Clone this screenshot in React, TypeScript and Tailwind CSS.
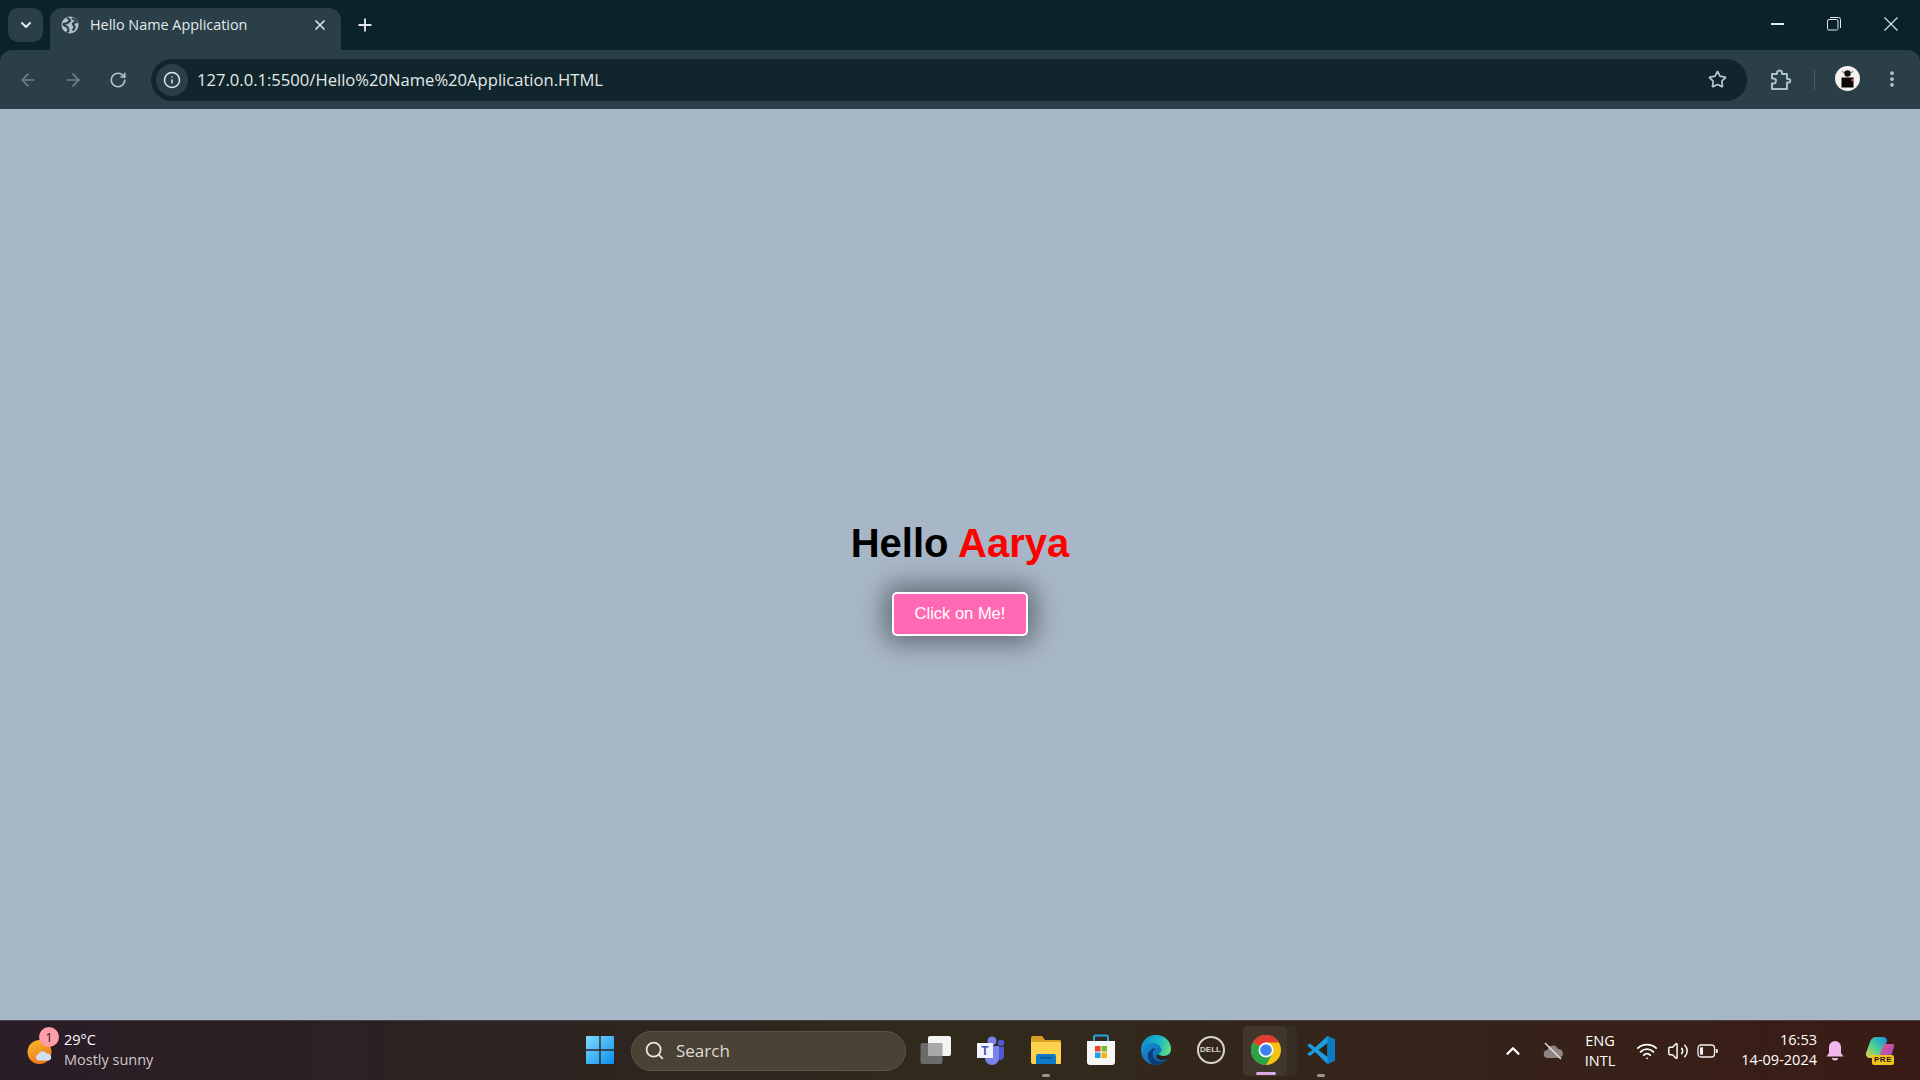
import { useState } from "react";
import {
  ArrowLeft,
  ArrowRight,
  ChevronDown,
  ChevronUp,
  EllipsisVertical,
  Info,
  Plus,
  RotateCw,
  Search,
  Star,
  Volume2,
  Wifi,
  X,
} from "lucide-react";

const GlobeIcon = () => (
  <svg width="18" height="18" viewBox="0 0 18 18">
    <circle cx="9" cy="9" r="8.5" fill="#b5c3c8" />
    <path d="M6 1.500c1 1.500 3 1.500 3 3S7 6 6.500 7 3 7 2.500 8s1.500 2 3 2.500 1.500 2 2 3.500-1.500 2-2 2.500M11 2c1 1 3.500 1.500 4.500 4-1.500.5-3 .5-3.500 1.500s1 1.500 1.500 3-1 3-2 4" fill="none" stroke="#2a3f47" strokeWidth="2.200" />
  </svg>
);

const PuzzleIcon = () => (
  <svg width="24" height="24" viewBox="0 0 24 24" fill="none" stroke="#a9c0c6" strokeWidth="2">
    <path d="M4 6h5V5a2.500 2.500 0 0 1 5 0v1h5v5h1.500a1.800 1.800 0 0 1 0 3.600H19V21H4v-5.500h1.500a2.500 2.500 0 0 0 0-5H4z" strokeLinejoin="round" />
  </svg>
);

const Avatar = () => (
  <svg width="25" height="25" viewBox="0 0 25 25">
    <circle cx="12.500" cy="12.500" r="12.500" fill="#f4f1ee" />
    <circle cx="12.500" cy="7.500" r="3.200" fill="#111" />
    <path d="M7 5.500 10 7M18 5.500 15 7" stroke="#555" strokeWidth="1" />
    <rect x="6.500" y="11.500" width="12" height="10" fill="#0a0a0a" />
    <rect x="16.500" y="13" width="2" height="2" fill="#e8662a" />
  </svg>
);

const WeatherIcon = () => (
  <div className="relative w-[26px] h-[28px]">
    <svg width="26" height="28" viewBox="0 0 26 28">
      <defs>
        <linearGradient id="sun" x1="0.200" y1="0" x2="0.700" y2="1">
          <stop offset="0" stopColor="#f3b72b" />
          <stop offset="1" stopColor="#f1741c" />
        </linearGradient>
      </defs>
      <circle cx="12.500" cy="15" r="12" fill="url(#sun)" />
      <path d="M11 23.500a3.300 3.300 0 0 1 .5-6.300 4.500 4.500 0 0 1 8.300-.5 3.500 3.500 0 0 1 1.700 6.800z" fill="#cfe0f5" />
    </svg>
    <span className="absolute left-[12px] top-[-10px] w-[20px] h-[20px] rounded-full bg-[#ff9ea6] text-[#222] text-[13px] leading-[20px] text-center">
      1
    </span>
  </div>
);

const StartIcon = () => (
  <svg width="30" height="30" viewBox="0 0 30 30">
    <defs>
      <linearGradient id="win" x1="0" y1="0" x2="1" y2="1">
        <stop offset="0" stopColor="#7fdcff" />
        <stop offset="1" stopColor="#0a8ff0" />
      </linearGradient>
    </defs>
    <path d="M1 2a1 1 0 0 1 1-1h12.300v13.300H1zM15.700 1H28a1 1 0 0 1 1 1v12.300H15.700zM1 15.700h13.300V29H2a1 1 0 0 1-1-1zM15.700 15.700H29V28a1 1 0 0 1-1 1H15.700z" fill="url(#win)" />
  </svg>
);

const TaskViewIcon = () => (
  <svg width="32" height="30" viewBox="0 0 32 30">
    <rect x="0.500" y="8" width="22" height="21" rx="2" fill="#6b6b6b" />
    <rect x="8" y="1" width="23" height="20" rx="2" fill="#f4f4f4" />
    <rect x="8" y="8" width="14.500" height="13" fill="#a9a9a9" />
  </svg>
);

const TeamsIcon = () => (
  <svg width="30" height="30" viewBox="0 0 30 30">
    <circle cx="16" cy="6" r="4.500" fill="#7b83eb" />
    <circle cx="25" cy="8" r="3.200" fill="#5059c9" />
    <path d="M20 12h8v9a4 4 0 0 1-8 0z" fill="#5059c9" />
    <path d="M9 11h14v12a6.500 6.500 0 0 1-14 0z" fill="#7b83eb" />
    <rect x="1" y="8" width="16" height="15" fill="#f3f3ff" />
    <text x="9" y="20" textAnchor="middle" fontFamily="Liberation Sans, sans-serif" fontWeight="700" fontSize="12" fill="#4b53bc">
      T
    </text>
  </svg>
);

const ExplorerIcon = () => (
  <svg width="32" height="30" viewBox="0 0 32 30">
    <path d="M1 3a2 2 0 0 1 2-2h9l3 4h15a1 1 0 0 1 1 1v4H1z" fill="#d9a021" />
    <path d="M1 7h29a1 1 0 0 1 1 1v20a1 1 0 0 1-1 1H3a2 2 0 0 1-2-2z" fill="#fdd24f" />
    <path d="M6 29v-8a2 2 0 0 1 2-2h16a2 2 0 0 1 2 2v8z" fill="#0f78c9" />
    <rect x="10" y="22" width="12" height="1.500" fill="#0a4f8f" />
  </svg>
);

const StoreIcon = () => (
  <svg width="30" height="32" viewBox="0 0 30 32">
    <path d="M8 7V3a1.500 1.500 0 0 1 1.500-1.500h11A1.500 1.500 0 0 1 22 3v4" fill="none" stroke="#22a4e0" strokeWidth="2" />
    <path d="M1 7h28v21a3 3 0 0 1-3 3H4a3 3 0 0 1-3-3z" fill="#f6f6f6" />
    <rect x="9" y="12" width="5.500" height="5.500" fill="#e8462a" />
    <rect x="15.500" y="12" width="5.500" height="5.500" fill="#7cb82b" />
    <rect x="9" y="18.500" width="5.500" height="5.500" fill="#1f9fe6" />
    <rect x="15.500" y="18.500" width="5.500" height="5.500" fill="#f8b50e" />
  </svg>
);

const EdgeIcon = () => (
  <svg width="30" height="30" viewBox="0 0 30 30">
    <defs>
      <linearGradient id="edgeTop" x1="0" y1="0.300" x2="1" y2="0.600">
        <stop offset="0" stopColor="#0c8fd0" />
        <stop offset="0.600" stopColor="#1fbcc0" />
        <stop offset="1" stopColor="#62e07a" />
      </linearGradient>
      <linearGradient id="edgeLow" x1="0" y1="0" x2="1" y2="1">
        <stop offset="0" stopColor="#1a9fe4" />
        <stop offset="1" stopColor="#0c4f96" />
      </linearGradient>
    </defs>
    <path d="M0 15C0 6 7 0 15 0c8 0 15 6 15 14 0 9-9 16-15 16C7 30 0 24 0 15z" fill="url(#edgeLow)" />
    <path d="M1 10C3 4 9 0 15 0c8 0 15 6 15 14 0 4-3 7-7 7-3 0-5-1-6-2 3-1 4-3 3-6-2-4-6-6-10-5-5 .5-8 1-9 2z" fill="url(#edgeTop)" />
    <path d="M27 23c-3 4-8 7-12 7-5 0-9-5-8-11 1-3 4-6 8-6-3 2-4 5-3 8 1 4 5 6 10 5 2 0 4-1 5-3z" fill="#0b3f7c" />
    <path d="M17 19c2 2 4 2 6 2 3 0 5-1 6-3-1 3-2 5-3 6-4 2-8 1-10-1-1-1-1-3 1-4z" fill="#2b2118" />
  </svg>
);

const DellIcon = () => (
  <div className="w-[28px] h-[28px] rounded-full border-2 border-[#d8d4d0] flex items-center justify-center text-[#d8d4d0] text-[8px] font-bold leading-none font-['Liberation_Sans',sans-serif]">
    DELL
  </div>
);

const ChromeIcon = () => (
  <svg width="30" height="30" viewBox="0 0 30 30">
    <circle cx="15" cy="15" r="15" fill="#f3c212" />
    <path d="M15 15 2 7.500A15 15 0 0 1 28 7.500H15z" fill="#e33b2e" />
    <path d="M15 15 2 7.500A15 15 0 0 0 15 30l6.500-11.300z" fill="#2ba245" />
    <circle cx="15" cy="15" r="7.500" fill="#fff" />
    <circle cx="15" cy="15" r="5.800" fill="#3a82f0" />
  </svg>
);

const VsCodeIcon = () => (
  <svg width="30" height="30" viewBox="0 0 30 30">
    <path d="M21.500 1 29 4.500v21L21.500 29 9 17l-5 4-3-2 5.500-4L1 10.500l3-2 5 4z" fill="#1f9ce0" />
    <path d="M21.500 8 12.500 15l9 7z" fill="#2b2118" />
    <path d="M21.500 1 29 4.500v21L21.500 29z" fill="#0a7cc4" />
  </svg>
);

const CloudOffIcon = () => (
  <svg width="22" height="18" viewBox="0 0 22 18">
    <path d="M6 16a4 4 0 0 1-.5-8 5.500 5.500 0 0 1 10.500-1 4.500 4.500 0 0 1 1 9z" fill="#8f8582" />
    <path d="M3 1l16 16" stroke="#e8e4e2" strokeWidth="1.500" />
  </svg>
);

const BatteryIcon = () => (
  <svg width="21" height="14" viewBox="0 0 21 14">
    <rect x="1" y="1" width="16.500" height="12" rx="3" fill="none" stroke="#f2f0ef" strokeWidth="1.300" />
    <rect x="3" y="3.300" width="3" height="7.400" fill="#f2f0ef" />
    <path d="M18.800 5h1a1 1 0 0 1 1 1v2a1 1 0 0 1-1 1h-1z" fill="#f2f0ef" />
  </svg>
);

const BellIcon = () => (
  <svg width="18" height="20" viewBox="0 0 18 20">
    <path d="M9 0a6 6 0 0 1 6 6v6l2.500 3.500H.500L3 12V6a6 6 0 0 1 6-6z" fill="#f0b8ee" />
    <path d="M6 17h6a3 2.500 0 0 1-6 0z" fill="#f0b8ee" />
  </svg>
);

const CopilotIcon = () => (
  <div className="relative w-[30px] h-[30px]">
    <svg width="30" height="30" viewBox="0 0 30 30">
      <defs>
        <linearGradient id="copA" x1="0" y1="1" x2="1" y2="0">
          <stop offset="0" stopColor="#f4d13a" />
          <stop offset="0.500" stopColor="#3fcf9a" />
          <stop offset="1" stopColor="#1b8fe8" />
        </linearGradient>
        <linearGradient id="copB" x1="0" y1="0" x2="1" y2="1">
          <stop offset="0" stopColor="#f0557a" />
          <stop offset="1" stopColor="#8f4fd8" />
        </linearGradient>
      </defs>
      <path d="M10 1h8a4 4 0 0 1 4 4l-7 17H5a4 4 0 0 1-4-5l4-11a7 7 0 0 1 5-5z" fill="url(#copA)" />
      <path d="M19 8h8a2 2 0 0 1 2 3l-3 9a4 4 0 0 1-4 3h-9z" fill="url(#copB)" />
    </svg>
    <span className="absolute left-[7px] top-[19px] w-[22px] h-[10px] rounded-[2px] bg-[#f6c21c] text-[#1a1a1a] text-[8px] font-bold leading-[10px] text-center tracking-[0.5px] font-['Liberation_Sans',sans-serif]">
      PRE
    </span>
  </div>
);

// one slot on the taskbar, 55px wide like the real one
const TaskItem = ({ children, dot, active }: { children: React.ReactNode; dot?: boolean; active?: boolean }) => (
  <div className="relative w-[55px] h-[50px] pb-[2px] flex items-center justify-center">
    {active && (
      <>
        <span className="absolute left-[10px] top-0 w-[49px] h-[50px] rounded-[5px] bg-[#362d24]" />
        <span className="absolute left-[5px] top-0 w-[44px] h-[50px] rounded-[5px] bg-[#40362c]" />
      </>
    )}
    <span className="relative flex">{children}</span>
    {dot && <span className="absolute bottom-[-1px] w-[8px] h-[3px] rounded-full bg-[#9a9590]" />}
    {active && <span className="absolute bottom-[1px] w-[20px] h-[3px] rounded-full bg-[#dba8e8]" />}
  </div>
);

const BrowserChrome = () => (
  <div className="bg-[#0a2229] text-[#e3e9ea]">
    <div className="h-[50px] flex items-end pl-[8px] pr-[22px]">
      <div className="w-[35px] h-[34px] mb-[8px] rounded-[10px] bg-[#2a3f47] flex items-center justify-center">
        <ChevronDown size={16} strokeWidth={3} />
      </div>
      <div className="relative ml-[7px] w-[291px] h-[42px] pb-[8px] pl-[11px] pr-[13px] rounded-t-[12px] bg-[#2a3f47] flex items-center gap-[11px]">
        <GlobeIcon />
        <span className="flex-1 text-[14.400px] font-['Open_Sans',sans-serif]">Hello Name Application</span>
        <X size={16} strokeWidth={2.500} />
      </div>
      <Plus size={20} strokeWidth={2.200} className="ml-[14px] mb-[15px]" />
      <div className="ml-auto mb-[19px] flex items-center gap-[43px]">
        <div className="w-[13px] h-[1.500px] bg-[#e3e9ea]" />
        <svg width="14" height="14" viewBox="0 0 14 14" fill="none" stroke="#e3e9ea" strokeWidth="1">
          <rect x="0.500" y="2.500" width="10.500" height="10.500" rx="1.500" />
          <path d="M3 .5h8.500a2 2 0 0 1 2 2V11" />
        </svg>
        <svg width="14" height="14" viewBox="0 0 14 14" fill="none" stroke="#e3e9ea" strokeWidth="1.100">
          <path d="M.5.5l13 13M13.500.5l-13 13" />
        </svg>
      </div>
    </div>
    <div className="h-[59px] rounded-t-[12px] bg-[#2a3f47] flex items-center pl-[18px] pr-[17px]">
      <ArrowLeft size={20} strokeWidth={2} className="text-[#6f8189]" />
      <ArrowRight size={20} strokeWidth={2} className="ml-[25px] text-[#6f8189]" />
      <RotateCw size={18} strokeWidth={2.200} className="ml-[26px] text-[#b3c6cb]" />
      <div className="ml-[24px] w-[1596px] h-[42px] rounded-full bg-[#11252c] flex items-center pl-[5px] pr-[20px]">
        <div className="w-[32px] h-[32px] rounded-full bg-[#2a3f47] flex items-center justify-center">
          <Info size={18} strokeWidth={2} />
        </div>
        <span className="ml-[9px] pt-[1px] flex-1 text-[16.600px] font-['Open_Sans',sans-serif]">
          127.0.0.1:5500/Hello%20Name%20Application.HTML
        </span>
        <Star size={19} strokeWidth={2.200} className="text-[#b3c6cb]" />
      </div>
      <div className="ml-[21px]">
        <PuzzleIcon />
      </div>
      <div className="ml-[22px] w-px h-[20px] bg-[#4a5f67]" />
      <div className="ml-[20px] mb-[2px]">
        <Avatar />
      </div>
      <EllipsisVertical size={20} strokeWidth={2.500} className="ml-[22px] mb-[1px] text-[#b3c6cb]" />
    </div>
  </div>
);

const Taskbar = () => (
  <footer className="h-[60px] border-t border-[#4a4048] bg-gradient-to-r from-[#2a1c26] via-[#302a1c] to-[#3a1b16] flex items-center text-white font-['Open_Sans',sans-serif]">
    <div className="w-[572px] pl-[27px] flex items-center gap-[11px]">
      <WeatherIcon />
      <div className="leading-[20px] text-[14.500px] mt-[-2px]">
        <div>29°C</div>
        <div className="text-[#cfc8cb]">Mostly sunny</div>
      </div>
    </div>
    <TaskItem>
      <StartIcon />
    </TaskItem>
    <div className="w-[275px] h-[40px] ml-[4px] rounded-full bg-[#4a4234] border border-[#5c5445] flex items-center pl-[12px] gap-[11px]">
      <Search size={21} strokeWidth={2} className="text-[#e8e6e2]" />
      <span className="text-[17px] text-[#dedbd6]">Search</span>
    </div>
    <div className="ml-[2px] flex items-center">
      <TaskItem>
        <TaskViewIcon />
      </TaskItem>
      <TaskItem>
        <TeamsIcon />
      </TaskItem>
      <TaskItem dot>
        <ExplorerIcon />
      </TaskItem>
      <TaskItem>
        <StoreIcon />
      </TaskItem>
      <TaskItem>
        <EdgeIcon />
      </TaskItem>
      <TaskItem>
        <DellIcon />
      </TaskItem>
      <TaskItem active>
        <ChromeIcon />
      </TaskItem>
      <TaskItem dot>
        <VsCodeIcon />
      </TaskItem>
    </div>
    <div className="flex-1 flex items-center pr-[25px]">
      <ChevronUp size={22} strokeWidth={2.500} className="ml-[154px]" />
      <div className="ml-[18px]">
        <CloudOffIcon />
      </div>
      <div className="ml-[16px] w-[40px] text-center text-[14.500px] leading-[20px]">
        <div>ENG</div>
        <div>INTL</div>
      </div>
      <Wifi size={22} strokeWidth={2} className="ml-[16px]" />
      <Volume2 size={22} strokeWidth={1.600} className="ml-[9px]" />
      <div className="ml-[8px]">
        <BatteryIcon />
      </div>
      <div className="ml-auto text-right text-[14.500px] leading-[20px] mt-[-2px]">
        <div>16:53</div>
        <div>14-09-2024</div>
      </div>
      <div className="ml-[9px]">
        <BellIcon />
      </div>
      <div className="ml-[21px]">
        <CopilotIcon />
      </div>
    </div>
  </footer>
);

export default function App() {
  const [name] = useState("Aarya");
  return (
    <div className="w-[1920px] h-[1080px] flex flex-col overflow-hidden">
      <BrowserChrome />
      <main className="flex-1 pt-[27px] bg-[#a8b7c7] flex flex-col items-center justify-center font-['Liberation_Sans',Arial,sans-serif]">
        <h1 className="text-[40px] font-bold leading-[46px] text-black">
          Hello <span className="text-[#ff0000]">{name}</span>
        </h1>
        <button className="mt-[26px] w-[136px] h-[44px] pb-[2px] rounded-[5px] border-2 border-white bg-[#ff69b4] text-white text-[16.500px] shadow-[0_0_26px_8px_rgba(0,0,0,0.4)]">
          Click on Me!
        </button>
      </main>
      <Taskbar />
    </div>
  );
}
